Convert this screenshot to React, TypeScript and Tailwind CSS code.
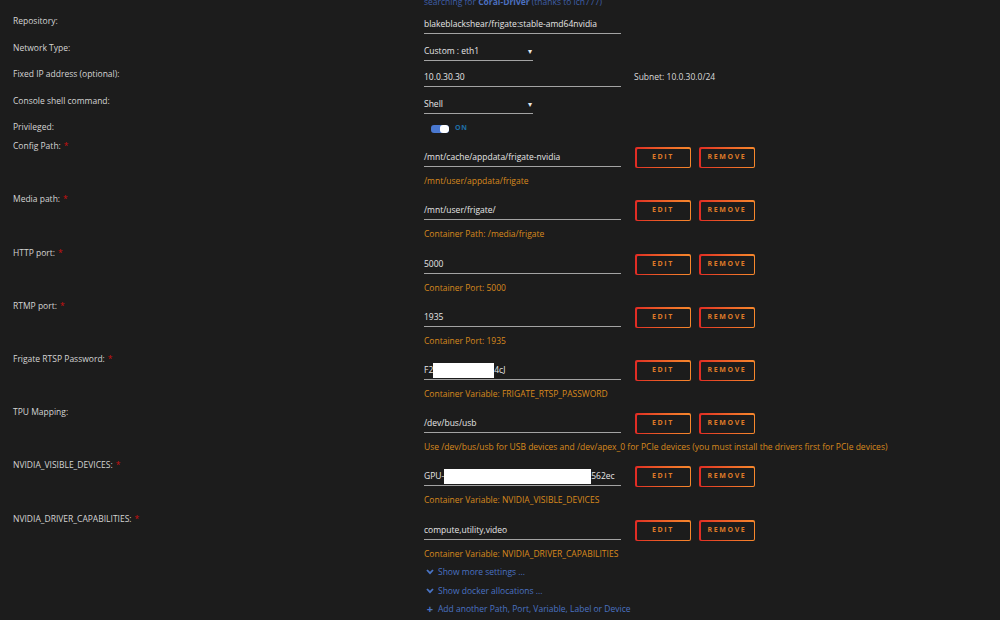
import { ReactNode } from "react";

const font = { fontFamily: '"Open Sans", "Liberation Sans", sans-serif' };

const Label = ({ text, req }: { text: string; req?: boolean }) => (
  <div className="w-[411px] shrink-0 pt-[5px] leading-[12px] text-[8.5px] text-[#d4d4d4]">
    {text}
    {req && <span className="ml-[3px] text-[#c81010]">*</span>}
  </div>
);

const Btn = ({ children }: { children: ReactNode }) => (
  <div className="w-[56px] h-[21px] p-[1.5px] rounded-[2px] bg-linear-to-r from-[#e02a24] to-[#f7882c]">
    <div className="w-full h-full bg-[#1c1c1c] rounded-[1px] flex items-center justify-center text-[7px] font-bold tracking-[1.6px] text-[#de7a28]">
      {children}
    </div>
  </div>
);

const Field = ({ children, w = "w-[197px]" }: { children: ReactNode; w?: string }) => (
  <div className={`${w} pb-[3px] border-b border-[#a3a3a3] leading-[12px] text-[8.5px] text-[#e6e6e6] flex items-center`}>
    {children}
  </div>
);

const Simple = ({ label, h, children }: { label: string; h: string; children: ReactNode }) => (
  <div className={`flex ${h}`}>
    <Label text={label} />
    <div className="pt-[8px] flex items-start">{children}</div>
  </div>
);

const PathRow = ({
  label,
  value,
  desc,
  req = true,
  h = "h-[53px]",
}: {
  label: string;
  value: ReactNode;
  desc: string;
  req?: boolean;
  h?: string;
}) => (
  <div className={`flex ${h}`}>
    <Label text={label} req={req} />
    <div className="flex flex-col">
      <div className="flex items-start">
        <div className="pt-[16px]">
          <Field>{value}</Field>
        </div>
        <div className="flex gap-[8px] ml-[14px] mt-[12px]">
          <Btn>EDIT</Btn>
          <Btn>REMOVE</Btn>
        </div>
      </div>
      <div className="mt-[7px] leading-[12px] text-[8.5px] text-[#d8891c] whitespace-nowrap">{desc}</div>
    </div>
  </div>
);

const Chevron = () => (
  <div className="h-[12px] flex items-center mr-[4px]">
    <svg width="8" height="6" viewBox="0 0 8 6">
      <path d="M1 1 L4 4.2 L7 1" stroke="#4a74c4" strokeWidth="1.8" fill="none" />
    </svg>
  </div>
);

export default function App() {
  return (
    <div className="w-[1000px] h-[620px] overflow-hidden bg-[#1c1c1c] pl-[13px]" style={font}>
      <div className="flex h-[10px]">
        <div className="w-[411px] shrink-0" />
        <div className="-mt-[4px] leading-[12px] text-[8.5px] text-[#3f5fa8]">
          searching for <span className="font-bold text-[#4b6fbf]">Coral-Driver</span> (thanks to ich777)
        </div>
      </div>

      <Simple label="Repository:" h="h-[27px]">
        <Field>blakeblackshear/frigate:stable-amd64nvidia</Field>
      </Simple>
      <Simple label="Network Type:" h="h-[26px]">
        <Field w="w-[109px]">
          <span className="flex-1">Custom : eth1</span>
          <span className="text-[8px] mr-[1px]">▾</span>
        </Field>
      </Simple>
      <Simple label="Fixed IP address (optional):" h="h-[27px]">
        <Field>10.0.30.30</Field>
        <span className="ml-[13px] leading-[12px] text-[8.5px] text-[#dadada]">Subnet: 10.0.30.0/24</span>
      </Simple>
      <Simple label="Console shell command:" h="h-[26px]">
        <Field w="w-[109px]">
          <span className="flex-1">Shell</span>
          <span className="text-[8px] mr-[1px]">▾</span>
        </Field>
      </Simple>

      <div className="flex h-[19px]">
        <Label text="Privileged:" />
        <div className="pt-[6px] flex items-center">
          <div className="ml-[7px] w-[18px] h-[8px] rounded-[3px] bg-[#4a78d0] flex justify-end overflow-hidden">
            <div className="w-[9px] h-[8px] rounded-[3px] bg-white" />
          </div>
          <span className="ml-[6px] text-[7px] font-bold tracking-[0.8px] text-[#1f6fa6]">ON</span>
        </div>
      </div>

      <PathRow label="Config Path:" value="/mnt/cache/appdata/frigate-nvidia" desc="/mnt/user/appdata/frigate" />
      <PathRow label="Media path:" value="/mnt/user/frigate/" desc="Container Path: /media/frigate" h="h-[54px]" />
      <PathRow label="HTTP port:" value="5000" desc="Container Port: 5000" />
      <PathRow label="RTMP port:" value="1935" desc="Container Port: 1935" />
      <PathRow
        label="Frigate RTSP Password:"
        value={
          <>
            F2<span className="inline-block w-[61px] h-[15px] -my-[2px] bg-white" />4cJ
          </>
        }
        desc="Container Variable: FRIGATE_RTSP_PASSWORD"
      />
      <PathRow
        label="TPU Mapping:"
        req={false}
        value="/dev/bus/usb"
        desc="Use /dev/bus/usb for USB devices and /dev/apex_0 for PCIe devices (you must install the drivers first for PCIe devices)"
      />
      <PathRow
        label="NVIDIA_VISIBLE_DEVICES:"
        h="h-[54px]"
        value={
          <>
            GPU-<span className="inline-block w-[147px] h-[15px] -my-[2px] bg-white" />562ec
          </>
        }
        desc="Container Variable: NVIDIA_VISIBLE_DEVICES"
      />
      <PathRow
        label="NVIDIA_DRIVER_CAPABILITIES:"
        value="compute,utility,video"
        desc="Container Variable: NVIDIA_DRIVER_CAPABILITIES"
      />

      <div className="pl-[411px] pt-[5px] text-[8.5px] leading-[12px] text-[#4a72c2]">
        <div className="h-[19px] flex items-start pl-[2px]">
          <Chevron />
          <span>Show more settings ...</span>
        </div>
        <div className="h-[18px] flex items-start pl-[2px]">
          <Chevron />
          <span>Show docker allocations ...</span>
        </div>
        <div className="h-[18px] flex items-start pl-[2px]">
          <span className="mr-[4px] w-[8px] font-bold text-[11px] leading-[12px] text-center">+</span>
          <span>Add another Path, Port, Variable, Label or Device</span>
        </div>
      </div>
    </div>
  );
}
